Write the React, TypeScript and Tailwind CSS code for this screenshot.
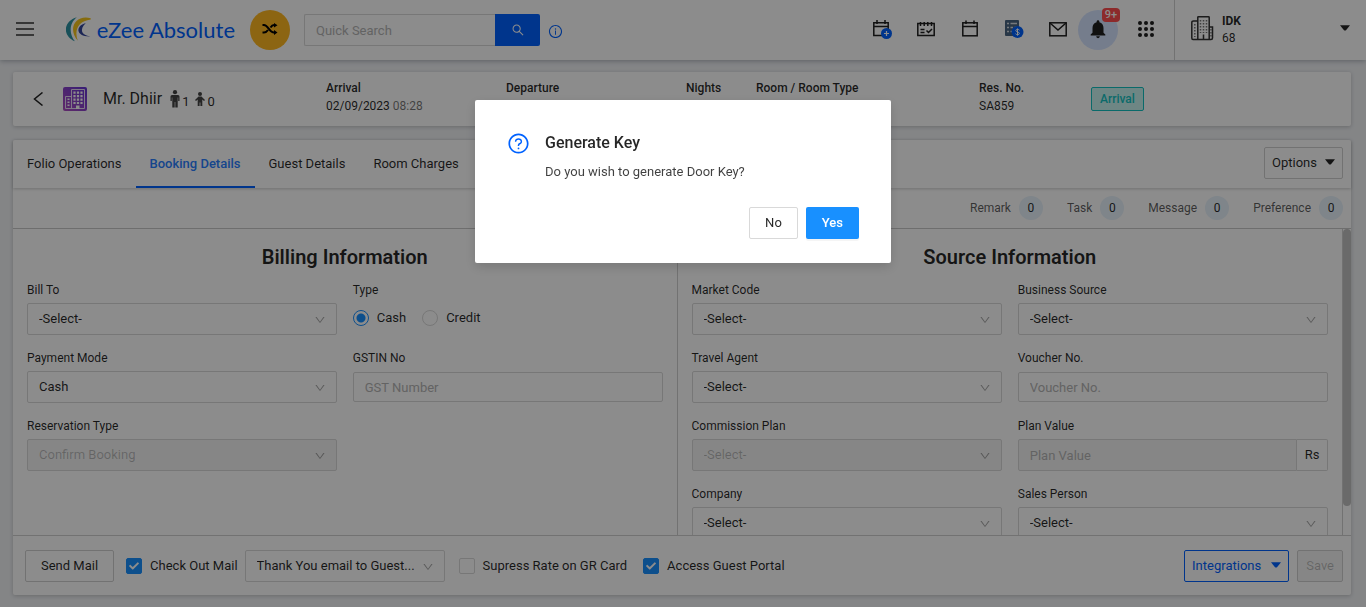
import { useState } from "react";
import type { ReactNode } from "react";
import { AiOutlineDown, AiOutlineInfoCircle, AiOutlineQuestionCircle, AiOutlineSearch } from "react-icons/ai";
import { FaCheck } from "react-icons/fa";
import { MdNotifications } from "react-icons/md";

const tabs = ["Folio Operations", "Booking Details", "Guest Details", "Room Charges"];

const counters = [
  { label: "Remark", count: 0 },
  { label: "Task", count: 0 },
  { label: "Message", count: 0 },
  { label: "Preference", count: 0 },
];

const Logo = () => (
  <svg viewBox="0 0 26 26" className="size-[26px]">
    <path d="M11 1C-3 5-4 20 9 25.500C3 18 3 7 11 1Z" fill="#2c93a3" />
    <path d="M25 2C10-2 1 12 12 25C8 15 12 5 25 3.500Z" fill="#f5c51c" />
    <path d="M20 7C9 10 10 21 24.500 20.500C16 19.500 13 14 20 7Z" fill="#34459c" />
  </svg>
);

const ShuffleIcon = () => (
  <svg viewBox="0 0 16 12" className="mb-0.5 h-3 w-4" fill="none" stroke="#000" strokeWidth="2">
    <path d="M0.500 2H2C6 2 7.500 9.500 12 9.500H13M0.500 9.500H2C4 9.500 5 8.500 6 7M8.500 4.500C9.500 3 10.500 2 12 2H13" />
    <path d="M12 0L15.500 2.200L12 4.500ZM12 7L15.500 9.500L12 12Z" fill="#000" stroke="none" />
  </svg>
);

const CalendarPlusIcon = () => (
  <svg viewBox="0 0 20 20" className="size-5" fill="none" stroke="#1f1f1f" strokeWidth="1.500">
    <path d="M10 16.500H1.800V3.800H16.200V10M1.800 7.500H16.200M5 1V5M13 1V5" />
    <circle cx="14.500" cy="14.500" r="5.500" fill="#0062ff" stroke="none" />
    <path d="M14.500 12V17M12 14.500H17" stroke="#fff" strokeWidth="1.200" />
  </svg>
);

const CalendarCheckIcon = () => (
  <svg viewBox="0 0 20 20" className="size-5" fill="none" stroke="#1f1f1f" strokeWidth="1.500">
    <rect x="1.800" y="4.500" width="16.400" height="12" />
    <path d="M4.500 3V7M8.200 3V7M11.800 3V7M15.500 3V7M4.500 10.500H8.500M4.500 13.500H8.500M10.500 11.500L12.500 13.500L16 10" />
  </svg>
);

const CalendarIcon = () => (
  <svg viewBox="0 0 20 20" className="size-5" fill="none" stroke="#1f1f1f" strokeWidth="1.500">
    <rect x="2.800" y="3.800" width="14.400" height="13" />
    <path d="M2.800 7.500H17.200M6 1.500V5M14 1.500V5" />
  </svg>
);

const LedgerIcon = () => (
  <svg viewBox="0 0 20 20" className="size-5">
    <rect x="1" y="1" width="14" height="16" rx="1" fill="#4a6482" />
    <path d="M3 4.500H5M6.500 4.500H13M3 8.500H5M6.500 8.500H9M10.500 8.500H13M3 12.500H5M6.500 12.500H9" stroke="#d8dde3" strokeWidth="1.500" />
    <circle cx="13.500" cy="13" r="6" fill="#0062ff" />
    <path d="M15.500 11.200C14.800 10 11.800 10 11.800 11.600C11.800 13.200 15.400 12.600 15.400 14.400C15.400 16 12.200 16 11.500 14.700M13.500 9.500V16.600" fill="none" stroke="#fff" />
  </svg>
);

const MailIcon = () => (
  <svg viewBox="0 0 20 20" className="size-5" fill="none" stroke="#1f1f1f" strokeWidth="1.500">
    <rect x="1.800" y="3.800" width="16.400" height="13" />
    <path d="M2 4L10 11L18 4" />
  </svg>
);

const AppsIcon = () => (
  <svg viewBox="0 0 16 16" className="mb-0.5 size-4" fill="#1f1f1f">
    {[2, 8, 14].map((y) => [2, 8, 14].map((x) => <circle key={`${x}-${y}`} cx={x} cy={y} r="2" />))}
  </svg>
);

const HotelIcon = () => (
  <svg viewBox="0 0 24 26" className="mb-1 h-[26px] w-6" fill="none" stroke="#333" strokeWidth="1.500">
    <path d="M7.800 24.500V2Q7.800 1.800 8.500 1.800H18.500Q19.200 1.800 19.200 2.500V24.500M7.800 6H3.500Q1.800 6 1.800 7.500V23Q1.800 24.500 3 24.500H21Q22.500 24.500 22.500 23V12H19.200M13.500 24V19.500" />
    <path d="M10.500 5V18M13.500 5V18M16.500 5V18M4.800 9V22M21 14V22" stroke="#777" strokeDasharray="1.500 1.500" strokeWidth="1.500" />
  </svg>
);

const RoomIcon = () => (
  <svg viewBox="0 0 24 24" className="size-6">
    <defs>
      <linearGradient id="room" x1="0" y1="1" x2="1" y2="0">
        <stop offset="0" stopColor="#b04fc0" />
        <stop offset="1" stopColor="#6435d6" />
      </linearGradient>
    </defs>
    <rect width="24" height="24" rx="2" fill="url(#room)" />
    <path d="M8.500 21.500V2.500H21.500V21.500H2.500V9.500H8" fill="none" stroke="#e8dcf5" />
    <path d="M11.500 4.500V17M15 4.500V17M18.500 4.500V17" stroke="#fff" strokeWidth="2.200" strokeDasharray="2.200 1.300" />
    <path d="M5.500 11.500V20" stroke="#fff" strokeWidth="2" strokeDasharray="1.500 1.500" />
    <path d="M13 18.500H16.500V22H13Z" fill="#fff" />
  </svg>
);

const AdultIcon = () => (
  <svg viewBox="0 0 10 18" className="h-[18px] w-2.5" fill="#444">
    <circle cx="5" cy="2.200" r="2.100" />
    <path d="M2 5H8Q9.500 5 9.500 6.500V11H8.200V7.500H7.700V17.500H5.300V12H4.700V17.500H2.300V7.500H1.800V11H0.500V6.500Q0.500 5 2 5Z" />
  </svg>
);

const ChildIcon = () => (
  <svg viewBox="0 0 10 14" className="h-3.5 w-2.5" fill="#444">
    <circle cx="5" cy="2" r="2" />
    <path d="M3.500 4.500H6.500L10 8L9 9L7.300 7.500V14H5.400V10.500H4.600V14H2.700V7.500L1 9L0 8Z" />
  </svg>
);

const Caret = () => (
  <svg viewBox="0 0 10 6" className="mb-0.5 h-1.5 w-2.5 shrink-0" fill="currentColor">
    <path d="M0 0.300H10L6 5.200Q5 6 4 5.200Z" />
  </svg>
);

type FieldProps = { id: string; label: string; children: ReactNode };

const Field = ({ id, label, children }: FieldProps) => (
  <div>
    <label htmlFor={id} className="mb-1 block text-xs leading-[18px]">
      {label}
    </label>
    <div className="flex h-8 items-center">{children}</div>
  </div>
);

type SelectProps = { id: string; value?: string; disabled?: boolean; label?: string };

const Select = ({ id, value = "-Select-", disabled, label }: SelectProps) => (
  <div className="relative w-full">
    <select
      id={id}
      aria-label={label}
      disabled={disabled}
      className="h-8 w-full appearance-none rounded-xs border border-[#d9d9d9] bg-white pr-7 pl-[11px] text-[13px] text-ellipsis disabled:bg-[#f5f5f5] disabled:text-black/25 disabled:opacity-100"
    >
      <option>{value}</option>
    </select>
    <AiOutlineDown className="pointer-events-none absolute top-[11px] right-[11px] size-3 text-black/35" />
  </div>
);

const inputStyle =
  "h-[30px] w-full min-w-0 rounded-xs border border-[#d9d9d9] bg-white px-[11px] text-[13px] placeholder:text-[#b5b5b5]";

type CheckProps = { id: string; label: string; defaultChecked?: boolean };

const Check = ({ id, label, defaultChecked }: CheckProps) => (
  <label htmlFor={id} className="flex items-center gap-2 text-[13px]">
    <span className="relative size-4">
      <input
        id={id}
        type="checkbox"
        defaultChecked={defaultChecked}
        className="peer block size-4 appearance-none rounded-xs border border-[#d9d9d9] bg-white checked:border-[#1890ff] checked:bg-[#1890ff]"
      />
      <FaCheck className="pointer-events-none absolute inset-[3px] hidden size-2.5 text-white peer-checked:block" />
    </span>
    {label}
  </label>
);

const radioStyle =
  "size-4 appearance-none rounded-full border border-[#d9d9d9] bg-white checked:border-[#1890ff] checked:bg-[radial-gradient(circle,#1890ff_4px,#fff_5px)]";

const Header = () => (
  <header className="z-10 flex h-[60px] shrink-0 items-center bg-white shadow-[0_1px_5px_rgba(0,21,41,0.3)]">
    <button aria-label="Menu" className="mb-0.5 ml-4">
      <svg viewBox="0 0 18 14" className="h-3.5 w-[18px]" stroke="#333" strokeWidth="1.500">
        <path d="M0 1H18M0 7H18M0 13H18" />
      </svg>
    </button>
    <a href="#" className="mb-0.5 ml-8 flex w-[169px] items-center gap-[5px] whitespace-nowrap font-[Lato,sans-serif] text-[22px] text-[#0062ff]">
      <Logo />
      eZee Absolute
    </a>
    <button aria-label="Switch" className="ml-[15px] flex size-10 items-center justify-center rounded-full bg-[#ffb822]">
      <ShuffleIcon />
    </button>
    <form className="ml-3.5 flex w-[236px]">
      <input
        aria-label="Quick Search"
        placeholder="Quick Search"
        className="h-8 w-full min-w-0 rounded-l-xs border border-r-0 border-[#d9d9d9] px-[11px] text-[13px] placeholder:text-[#b5b5b5]"
      />
      <button type="button" aria-label="Search" className="flex h-8 w-[45px] shrink-0 items-center justify-center rounded-r-xs bg-[#0062ff] text-white">
        <AiOutlineSearch className="size-3.5" />
      </button>
    </form>
    <AiOutlineInfoCircle className="mt-0.5 ml-2 size-[15px] text-[#0062ff]" />

    <div className="ml-auto flex h-full items-center">
      <div className="mr-2.5 mb-0.5 flex gap-6">
        <button aria-label="Add reservation"><CalendarPlusIcon /></button>
        <button aria-label="Tasks"><CalendarCheckIcon /></button>
        <button aria-label="Calendar"><CalendarIcon /></button>
        <button aria-label="Night audit"><LedgerIcon /></button>
        <button aria-label="Mail"><MailIcon /></button>
      </div>
      <button aria-label="Notifications" className="relative flex size-10 items-center justify-center rounded-full bg-[#d6e4ff]">
        <MdNotifications className="mb-0.5 size-[22px] text-[#1f1f1f]" />
        <span className="absolute -top-0.5 -right-0.5 rounded bg-[#ff4d4f] px-[3px] text-[11px] leading-[14px] font-medium text-white">9+</span>
      </button>
      <button aria-label="Apps" className="flex w-14 justify-center"><AppsIcon /></button>
      <button className="flex h-full w-48 items-center border-l border-[#d0d0d0] pl-[15px] text-left">
        <HotelIcon />
        <span className="ml-2 text-xs leading-[17px]">
          <b className="block font-bold">IDK</b>
          68
        </span>
        <span className="mr-4 mb-0.5 ml-auto"><Caret /></span>
      </button>
    </div>
  </header>
);

const GuestBar = () => (
  <section className="grid h-[54px] shrink-0 grid-cols-[313fr_180fr_180fr_70fr_223fr_112fr_260fr] rounded-xs bg-white pt-[7px] text-xs leading-[18px] shadow-[0_1px_4px_rgba(0,0,0,0.2)]">
    <div className="flex h-10 items-center">
      <button aria-label="Back" className="ml-5">
        <svg viewBox="0 0 10 14" className="h-3.5 w-2.5" fill="none" stroke="#222" strokeWidth="1.500">
          <path d="M9.500 0.500L1.500 7L9.500 13.500" />
        </svg>
      </button>
      <span className="ml-5"><RoomIcon /></span>
      <h1 className="ml-4 text-base">Mr. Dhiir</h1>
      <span className="ml-2 flex items-center text-[13px]">
        <AdultIcon />
        <span className="ml-0.5 pt-1.5">1</span>
        <span className="ml-1.5"><ChildIcon /></span>
        <span className="ml-0.5 pt-1.5">0</span>
      </span>
    </div>
    <dl>
      <dt className="font-medium">Arrival</dt>
      <dd>
        02/09/2023 <span className="text-black/55">08:28</span>
      </dd>
    </dl>
    <p className="font-medium">Departure</p>
    <p className="font-medium">Nights</p>
    <p className="font-medium">Room / Room Type</p>
    <dl>
      <dt className="font-medium">Res. No.</dt>
      <dd>SA859</dd>
    </dl>
    <div className="flex h-10 items-center">
      <span className="rounded-xs border border-[#13c2c2] bg-[#c9f5f0] px-2 leading-[22px] font-medium text-[#13c2c2]">Arrival</span>
    </div>
  </section>
);

const BookingDetails = () => (
  <div className="flex min-h-0 flex-1 overflow-hidden">
    <div className="grid flex-1 grid-cols-2">
      <section className="border-r border-[#d0d0d0] px-3.5 pt-3.5">
        <h2 className="mb-2.5 text-center text-xl leading-7 font-semibold">Billing Information</h2>
        <div className="grid grid-cols-2 gap-x-4 gap-y-3.5">
          <Field id="billTo" label="Bill To"><Select id="billTo" /></Field>
          <fieldset>
            <legend className="text-xs leading-[18px]">Type</legend>
            <div className="mt-[9px] flex gap-4 text-[13px]">
              <label className="flex items-center gap-2">
                <input type="radio" name="type" defaultChecked className={radioStyle} />
                Cash
              </label>
              <label className="flex items-center gap-2">
                <input type="radio" name="type" className={radioStyle} />
                Credit
              </label>
            </div>
          </fieldset>
          <Field id="payment" label="Payment Mode"><Select id="payment" value="Cash" /></Field>
          <Field id="gstin" label="GSTIN No">
            <input id="gstin" placeholder="GST Number" className={inputStyle} />
          </Field>
          <Field id="resType" label="Reservation Type"><Select id="resType" value="Confirm Booking" disabled /></Field>
        </div>
      </section>

      <section className="px-3.5 pt-3.5">
        <h2 className="mb-2.5 text-center text-xl leading-7 font-semibold">Source Information</h2>
        <div className="grid grid-cols-2 gap-x-4 gap-y-3.5">
          <Field id="market" label="Market Code"><Select id="market" /></Field>
          <Field id="source" label="Business Source"><Select id="source" /></Field>
          <Field id="agent" label="Travel Agent"><Select id="agent" /></Field>
          <Field id="voucher" label="Voucher No.">
            <input id="voucher" placeholder="Voucher No." className={inputStyle} />
          </Field>
          <Field id="commission" label="Commission Plan"><Select id="commission" disabled /></Field>
          <Field id="plan" label="Plan Value">
            <input
              id="plan"
              disabled
              placeholder="Plan Value"
              className="h-8 w-full min-w-0 rounded-l-xs border border-[#d9d9d9] bg-[#f5f5f5] px-[11px] text-[13px] placeholder:text-[#b5b5b5]"
            />
            <span className="flex h-8 w-[31px] shrink-0 items-center justify-center rounded-r-xs border border-l-0 border-[#d9d9d9] text-[13px]">Rs</span>
          </Field>
          <Field id="company" label="Company"><Select id="company" /></Field>
          <Field id="sales" label="Sales Person"><Select id="sales" /></Field>
        </div>
      </section>
    </div>
    <div className="w-[9px] border-l border-[#d0d0d0]">
      <div className="h-[277px] rounded-full bg-[#c1c1c1]" />
    </div>
  </div>
);

const KeyDialog = ({ onClose }: { onClose: () => void }) => (
  <div className="fixed inset-0 z-20 flex items-start justify-center bg-black/45 pt-[100px]">
    <div role="dialog" aria-modal="true" aria-labelledby="keyTitle" className="w-[416px] rounded-xs bg-white px-8 pt-8 pb-6 shadow-[0_4px_12px_rgba(0,0,0,0.15)]">
      <div className="flex gap-[15px]">
        <AiOutlineQuestionCircle className="size-[23px] text-[#0062ff]" />
        <div>
          <h2 id="keyTitle" className="text-base leading-[22px] font-medium">Generate Key</h2>
          <p className="mt-2 text-[13px] leading-5 text-black/75">Do you wish to generate Door Key?</p>
        </div>
      </div>
      <div className="mt-[25px] flex justify-end gap-2 text-[13px]">
        <button onClick={onClose} className="h-8 rounded-xs border border-[#d9d9d9] px-[15px]">No</button>
        <button onClick={onClose} className="h-8 rounded-xs bg-[#1890ff] px-4 font-medium text-white shadow-[0_2px_0_rgba(0,0,0,0.04)]">Yes</button>
      </div>
    </div>
  </div>
);

const App = () => {
  const [activeTab, setActiveTab] = useState("Booking Details");
  const [dialogOpen, setDialogOpen] = useState(true);

  return (
    <div className="flex h-screen flex-col overflow-hidden bg-[#f0f2f5] font-[Roboto,sans-serif] text-black/85">
      <Header />
      <main className="flex min-h-0 flex-1 flex-col gap-3.5 pt-3 pr-[15px] pb-3 pl-[13px]">
        <GuestBar />
        <div className="flex min-h-0 flex-1 flex-col rounded-xs bg-white shadow-[0_1px_4px_rgba(0,0,0,0.2)]">
          <nav className="flex h-12 shrink-0 items-center shadow-[0_1px_3px_rgba(0,0,0,0.2)]">
            {tabs.map((tab) => (
              <button
                key={tab}
                onClick={() => setActiveTab(tab)}
                className={
                  tab === activeTab
                    ? "h-full border-b-2 border-[#0062ff] px-3.5 pt-0.5 text-[13px] font-medium text-[#2a7fff]"
                    : "h-full border-b-2 border-transparent px-3.5 pt-0.5 text-[13px]"
                }
              >
                {tab}
              </button>
            ))}
            <button className="mt-[-3px] mr-2 ml-auto flex h-8 items-center gap-2 rounded-xs border border-[#d0d0d0] px-[7px] text-[13px]">
              Options <Caret />
            </button>
          </nav>
          <div className="flex h-[41px] shrink-0 items-center justify-end gap-6 border-b border-[#c8c8c8] pr-2 text-xs">
            {counters.map((item) => (
              <span key={item.label} className="flex items-center gap-2 text-black/65">
                {item.label}
                <span className="flex size-6 items-center justify-center rounded-full bg-[#e7f2fb] text-black/85">{item.count}</span>
              </span>
            ))}
          </div>
          <BookingDetails />
          <footer className="flex h-[60px] shrink-0 items-center border-t border-[#d0d0d0] pr-2 pl-3 text-[13px]">
            <button className="h-8 rounded-xs border border-[#d0d0d0] px-[15px]">Send Mail</button>
            <div className="ml-3"><Check id="checkout" label="Check Out Mail" defaultChecked /></div>
            <div className="ml-[7px] w-[200px]"><Select id="template" label="Mail template" value="Thank You email to Guest..." /></div>
            <div className="ml-3.5"><Check id="supress" label="Supress Rate on GR Card" /></div>
            <div className="ml-4"><Check id="portal" label="Access Guest Portal" defaultChecked /></div>
            <button className="ml-auto flex h-8 items-center gap-2.5 rounded-xs border border-[#0062ff] px-[7px] text-[#0062ff]">
              Integrations <Caret />
            </button>
            <button disabled className="ml-2 h-8 rounded-xs border border-[#d0d0d0] bg-[#f5f5f5] px-2 text-black/25">Save</button>
          </footer>
        </div>
      </main>
      {dialogOpen && <KeyDialog onClose={() => setDialogOpen(false)} />}
    </div>
  );
};

export default App;
